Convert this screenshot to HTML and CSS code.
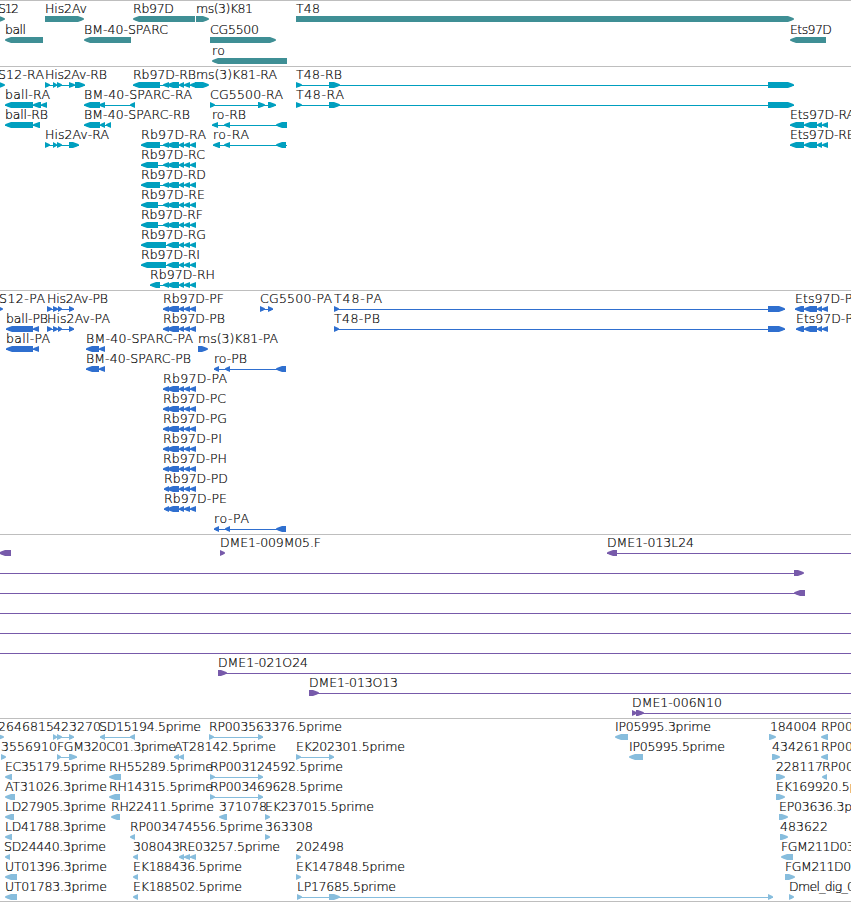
FILE: index.html
```html
<!DOCTYPE html>
<html lang="en">
  <head>
    <meta charset="UTF-8" />
    <meta name="viewport" content="width=device-width, initial-scale=1.0" />
    <title>Genome Browser</title>
    <link rel="stylesheet" href="styles.css" />
  </head>
  <body>
    <main id="browser">
      <section class="track genes"></section>
      <section class="track transcripts"></section>
      <section class="track proteins"></section>
      <section class="track bacs"></section>
      <section class="track ests"></section>
    </main>
    <script src="tracks.js"></script>
  </body>
</html>
```

FILE: styles.css
```css
body {
  margin: 0;
  background: #fff;
  overflow: hidden;
}
#browser {
  display: flex;
  flex-direction: column;
  border-bottom: 1px solid #bebebe;
}
.track {
  border-top: 1px solid #bebebe;
}
.track svg {
  display: block;
  width: 100%;
}
.genes {
  color: #3f8f95;
}
.transcripts {
  color: #009fbf;
}
.proteins {
  color: #2f6fcf;
}
.bacs {
  color: #775aaa;
}
.ests {
  color: #87bddd;
}
.exon,
.intron {
  fill: currentColor;
}
.label {
  fill: #000;
  stroke: #000;
  stroke-width: 0.2px;
  font-family: "DejaVu Sans Light", "DejaVu Sans", sans-serif;
  font-weight: 200;
  font-size: 12.5px;
}
```

FILE: tracks.js
```javascript
// feature: label | label start | label end | strand | blocks | optional line range
const tracks = {
  genes: {
    pitch: 21,
    height: 65,
    rows: [
      ["S12|-2|19|+|-20:5", "His2Av|45|87|+|45:84", "Rb97D|133|174|-|133:195", "ms(3)K81|196|253|+|196:209", "T48|296|320|+|296:794"],
      ["ball|5|26|-|5:43", "BM-40-SPARC|84|168|-|84:131", "CG5500|210|259|+|210:276", "Ets97D|790|832|-|790:826"],
      ["ro|212|225|-|212:287"],
    ],
  },
  transcripts: {
    pitch: 20,
    height: 223,
    rows: [
      ["S12-RA|-2|44|+|-20:5", "His2Av-RB|45|107|+|45:50,53:57,57:62,69:75,75:85", "Rb97D-RB|133|196|-|133:160,163:169,167:179,179:184,184:190,190:196", "ms(3)K81-RA|196|277|+|195:209", "T48-RB|296|342|+|296:302,329:340,768:794"],
      ["ball-RA|5|50|-|5:33,33:41,41:47", "BM-40-SPARC-RA|84|192|-|84:100,99:105,130:135", "CG5500-RA|210|283|+|210:215,258:265,268:276", "T48-RA|296|344|+|296:302,329:340,768:794"],
      ["ball-RB|5|48|-|5:33,33:40", "BM-40-SPARC-RB|84|190|-|84:100,100:105,106:111", "ro-RB|212|246|-|212:218,224:230,276:287", "Ets97D-RA|790|855|-|790:804,804:817,817:822,822:828"],
      ["His2Av-RA|45|109|+|45:50,53:57,57:62,69:79", "Rb97D-RA|141|206|-|141:160,163:169,167:179,179:184,184:190,190:196", "ro-RA|213|249|-|213:220,224:230,276:286|213:287", "Ets97D-RB|790|855|-|790:804,804:817,817:822,822:828"],
      ["Rb97D-RC|141|205|-|141:158,163:169,167:179,179:184,184:190,190:196"],
      ["Rb97D-RD|141|206|-|141:160,163:169,167:179,179:184,184:190,190:196"],
      ["Rb97D-RE|141|205|-|141:158,163:169,167:179,179:184,184:190,190:196"],
      ["Rb97D-RF|141|203|-|141:158,163:169,167:179,179:184,184:190,190:196"],
      ["Rb97D-RG|141|206|-|141:166,167:179,179:184,184:190,190:196"],
      ["Rb97D-RI|141|200|-|141:166,167:179,179:184,184:190,190:196"],
      ["Rb97D-RH|150|215|-|150:160,163:169,167:179,179:184,184:190,190:196"],
    ],
  },
  proteins: {
    pitch: 20,
    height: 243,
    rows: [
      ["S12-PA|-1|45|+|-20:3", "His2Av-PB|47|108|+|47:52,53:58,58:62,69:74", "Rb97D-PF|163|224|-|163:169,167:179,179:184,184:190,190:196", "CG5500-PA|260|332|+|260:265,268:273", "T48-PA|334|382|+|334:339,768:785", "Ets97D-PA|795|860|-|795:804,804:817,817:822,822:828"],
      ["ball-PB|6|48|-|6:33,33:39", "His2Av-PA|47|110|+|47:52,53:58,58:62,69:74", "Rb97D-PB|163|225|-|163:169,167:179,179:184,184:190,190:196", "T48-PB|334|380|+|334:339,768:785", "Ets97D-PB|796|861|-|796:804,804:817,817:822,822:828"],
      ["ball-PA|6|50|-|6:33,33:39", "BM-40-SPARC-PA|86|193|-|86:99,99:105", "ms(3)K81-PA|198|278|+|198:208"],
      ["BM-40-SPARC-PB|86|191|-|86:99,99:105", "ro-PB|214|247|-|214:219,225:230,276:286"],
      ["Rb97D-PA|163|227|-|163:169,167:179,179:184,184:190,190:196"],
      ["Rb97D-PC|163|226|-|163:169,167:179,179:184,184:190,190:196"],
      ["Rb97D-PG|163|227|-|163:169,167:179,179:184,184:190,190:196"],
      ["Rb97D-PI|163|222|-|163:169,167:179,179:184,184:190,190:196"],
      ["Rb97D-PH|163|227|-|163:169,167:179,179:184,184:190,190:196"],
      ["Rb97D-PD|164|228|-|164:169,167:179,179:184,184:190,190:196"],
      ["Rb97D-PE|164|227|-|164:169,167:179,179:184,184:190,190:196"],
      ["ro-PA|214|249|-|214:219,225:230,276:286"],
    ],
  },
  bacs: {
    pitch: 20,
    height: 183,
    rows: [
      ["|0|0|-|-1:11", "DME1-009M05.F|220|321|+|220:225", "DME1-013L24|607|694|-|607:617|607:860"],
      ["|0|0|+|794:804|-10:794"],
      ["|0|0|-|794:805|-10:796"],
      ["|0|0|+||-10:860"],
      ["|0|0|+||-10:860"],
      ["|0|0|+||-10:860"],
      ["DME1-021O24|218|308|+|218:227|218:860"],
      ["DME1-013O13|309|398|+|309:319|309:860"],
      ["DME1-006N10|632|722|+|632:637,636:644|632:860"],
    ],
  },
  ests: {
    pitch: 20,
    height: 182,
    rows: [
      ["2646815|-2|54|+|-5:4", "423270|53|101|+|53:57,57:62,69:74", "SD15194.5prime|99|201|-|100:105,130:135", "RP003563376.5prime|209|342|+|209:214,258:263", "IP05995.3prime|615|711|-|615:628", "184004|770|817|+|769:776", "RP003361.3prime|821|932|-|821:828"],
      ["3556910|1|57|+|1:6", "FGM320C01.3prime|57|176|+|57:61,69:77", "AT28142.5prime|174|276|-|174:179,179:184", "EK202301.5prime|296|405|+|296:301,329:334", "IP05995.5prime|629|725|-|629:643", "434261|772|820|+|772:780", "RP003361.5prime|821|932|-|821:828"],
      ["EC35179.5prime|5|106|-|5:12", "RH55289.5prime|109|213|-|109:121", "RP003124592.5prime|210|343|+|210:215,258:263", "228117|776|823|+|776:785", "RP003452.5prime|822|933|-|822:827"],
      ["AT31026.3prime|5|107|-|5:15", "RH14315.5prime|109|213|-|109:120", "RP003469628.5prime|210|343|+|210:215,258:263", "EK169920.5prime|776|885|+|776:785"],
      ["LD27905.3prime|5|106|-|5:14", "RH22411.5prime|111|214|-|111:120", "371078|219|267|-|219:227", "EK237015.5prime|265|374|+|265:270", "EP03636.3prime|779|880|+|779:788"],
      ["LD41788.3prime|5|106|-|5:12", "RP003474556.5prime|130|263|-|130:135", "363308|265|313|+|265:270", "483622|780|828|+|780:788"],
      ["SD24440.3prime|4|106|-|5:10", "308043|133|180|-|133:138", "RE03257.5prime|179|280|-|179:184,184:190,190:196", "202498|296|344|+|296:301", "FGM211D03.3prime|781|900|-|781:793"],
      ["UT01396.3prime|5|107|-|5:17", "EK188436.5prime|133|242|-|133:138", "EK147848.5prime|296|405|+|296:301", "FGM211D03.5prime|785|904|+|785:795"],
      ["UT01783.3prime|5|107|-|5:17", "EK188502.5prime|133|242|-|133:138", "LP17685.5prime|297|396|+|297:302,329:340,768:773", "Dmel_dig_0|789|855|+|789:794"],
    ],
  },
};

const SVG = "http://www.w3.org/2000/svg";

function add(parent, tag, attrs, text) {
  const el = document.createElementNS(SVG, tag);
  for (const key in attrs) el.setAttribute(key, attrs[key]);
  if (text) el.textContent = text;
  parent.appendChild(el);
  return el;
}

// block with a pointed head on the strand side
function arrow(start, end, strand) {
  const head = Math.min(6, end - start);
  if (strand === "+") {
    return `${start},15 ${end - head},15 ${end - head / 3},16.4 ${end},17.5 ${end},18.5 ${end - head / 3},19.6 ${end - head},21 ${start},21`;
  }
  return `${end},15 ${start + head},15 ${start + head / 3},16.4 ${start},17.5 ${start},18.5 ${start + head / 3},19.6 ${start + head},21 ${end},21`;
}

function drawFeature(row, feature) {
  const [name, from, to, strand, blockList, range] = feature.split("|");
  const blocks = blockList ? blockList.split(",").map((b) => b.split(":").map(Number)) : [];
  const [a, b] = range ? range.split(":").map(Number) : [blocks[0][0], blocks[blocks.length - 1][1]];

  if (range || blocks.length > 1) {
    add(row, "rect", { class: "intron", x: a, y: 18, width: b - a, height: 1 });
  }
  blocks.forEach(([start, end]) => {
    add(row, "polygon", { class: "exon", points: arrow(start, end, strand) });
  });
  if (name) {
    add(row, "text", { class: "label", x: from, y: 12, textLength: to - from }, name);
  }
}

for (const name in tracks) {
  const track = tracks[name];
  const svg = add(document.querySelector("." + name), "svg", { height: track.height });
  track.rows.forEach((features, i) => {
    const row = add(svg, "g", { transform: `translate(0 ${i * track.pitch})` });
    features.forEach((feature) => drawFeature(row, feature));
  });
}
```
